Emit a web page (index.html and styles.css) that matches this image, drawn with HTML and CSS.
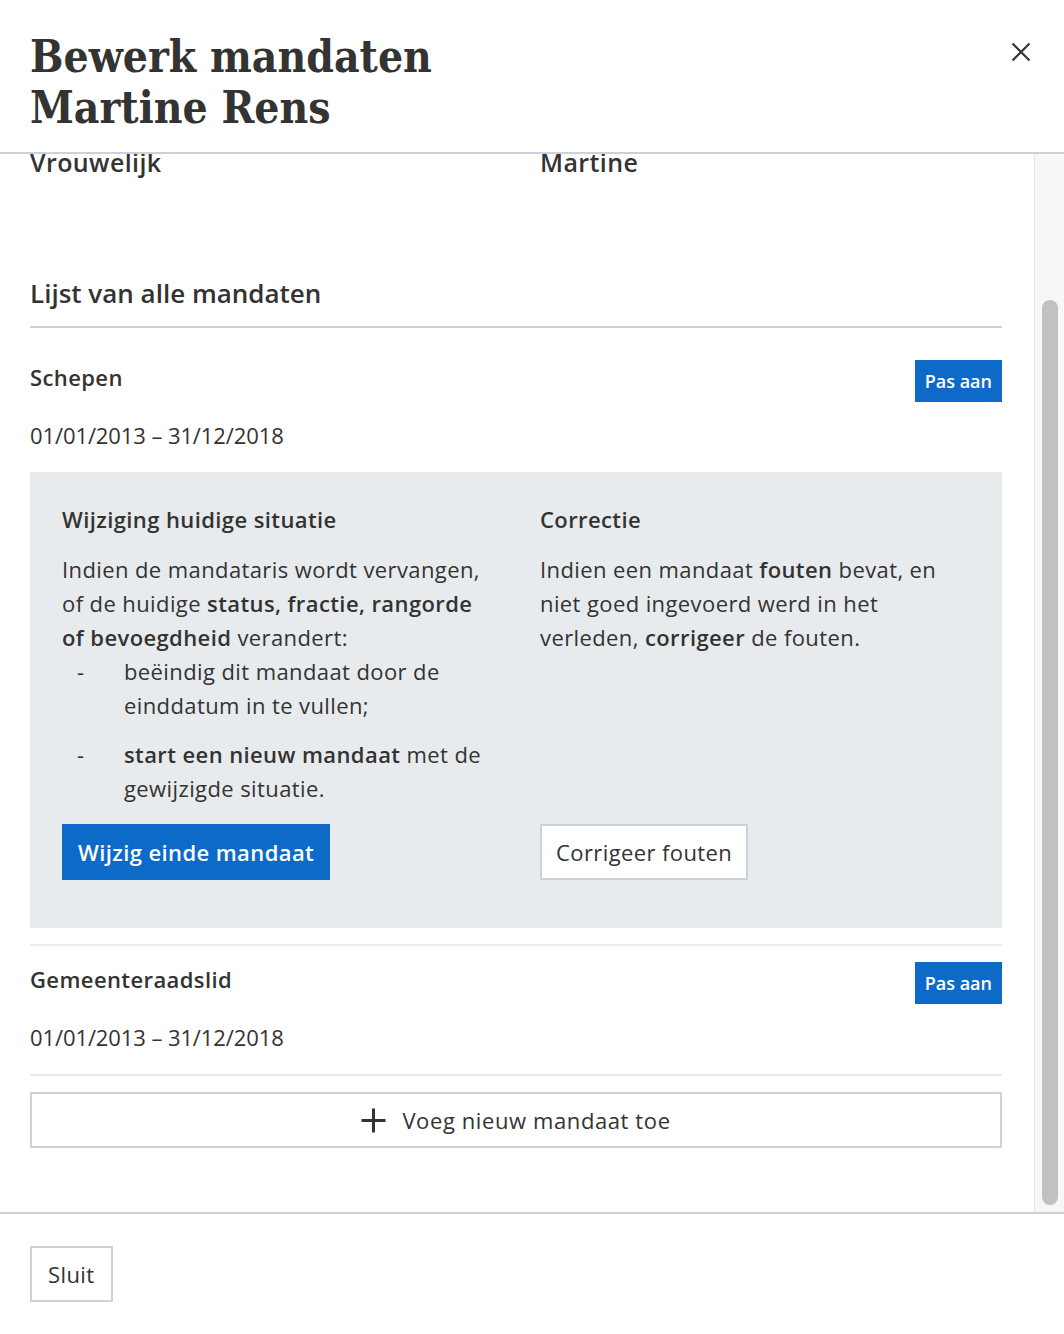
FILE: index.html
```html
<!DOCTYPE html>
<html lang="nl">
<head>
<meta charset="utf-8">
<title>Bewerk mandaten</title>
<link rel="stylesheet" href="styles.css">
</head>
<body>
<div class="modal">
  <header class="modal-header">
    <h1 class="modal-title">Bewerk mandaten<br>Martine Rens</h1>
    <button class="close-btn" type="button" aria-label="Sluit">
      <svg width="20" height="20" viewBox="0 0 20 20" aria-hidden="true"><path d="M1.5 1.5 L18.5 18.5 M18.5 1.5 L1.5 18.5" stroke="#333332" stroke-width="2.2" fill="none"/></svg>
    </button>
  </header>

  <div class="modal-body">
    <div class="scroll-view">
      <div class="body-inner">
        <dl class="person-grid">
          <div class="field"><dt>Familienaam</dt><dd>Rens</dd></div>
          <div class="field"><dt>Voornaam</dt><dd>Martine</dd></div>
          <div class="field"><dt>Geslacht</dt><dd>Vrouwelijk</dd></div>
          <div class="field"><dt>Roepnaam</dt><dd>Martine</dd></div>
        </dl>

        <h2 class="section-title">Lijst van alle mandaten</h2>

        <ul class="mandate-list">
          <li class="mandate">
            <div class="mandate-head">
              <h3 class="mandate-name">Schepen</h3>
              <button class="btn btn-primary btn-small" type="button">Pas aan</button>
            </div>
            <p class="mandate-period">01/01/2013 – 31/12/2018</p>
            <div class="info-box">
              <div class="info-col">
                <h4 class="info-title">Wijziging huidige situatie</h4>
                <p class="info-text">Indien de mandataris wordt vervangen, of de huidige <strong>status, fractie, rangorde of bevoegdheid</strong> verandert:</p>
                <ul class="dash-list">
                  <li><span>beëindig dit mandaat door de einddatum in te vullen;</span></li>
                  <li><span><strong>start een nieuw mandaat</strong> met de gewijzigde situatie.</span></li>
                </ul>
                <button class="btn btn-primary btn-large" type="button">Wijzig einde mandaat</button>
              </div>
              <div class="info-col">
                <h4 class="info-title">Correctie</h4>
                <p class="info-text">Indien een mandaat <strong>fouten</strong> bevat, en niet goed ingevoerd werd in het verleden, <strong>corrigeer</strong> de fouten.</p>
                <button class="btn btn-secondary btn-large" type="button">Corrigeer fouten</button>
              </div>
            </div>
          </li>
          <li class="mandate">
            <div class="mandate-head">
              <h3 class="mandate-name">Gemeenteraadslid</h3>
              <button class="btn btn-primary btn-small" type="button">Pas aan</button>
            </div>
            <p class="mandate-period">01/01/2013 – 31/12/2018</p>
          </li>
        </ul>

        <button class="btn btn-secondary btn-block" type="button">
          <svg width="25" height="25" viewBox="0 0 25 25" aria-hidden="true"><path d="M12.5 0.5 V24.5 M0.5 12.5 H24.5" stroke="#333332" stroke-width="3" fill="none"/></svg>
          <span>Voeg nieuw mandaat toe</span>
        </button>
      </div>
    </div>
    <div class="scrollbar" aria-hidden="true">
      <div class="scrollbar-thumb"></div>
    </div>
  </div>

  <footer class="modal-footer">
    <button class="btn btn-secondary btn-large btn-close" type="button">Sluit</button>
  </footer>
</div>
</body>
</html>
```
FILE: styles.css
```css
* { box-sizing: border-box; }

html, body {
  margin: 0;
  padding: 0;
  height: 100%;
}

body {
  font-family: "Open Sans", "Noto Sans", sans-serif;
  letter-spacing: 0.4px;
  color: #333332;
  background: #fff;
}

.modal {
  height: 100vh;
  display: flex;
  flex-direction: column;
  background: #fff;
}

/* Header */
.modal-header {
  flex-shrink: 0;
  display: flex;
  justify-content: space-between;
  align-items: flex-start;
  padding: 31px 33px 19px 30px;
  border-bottom: 2px solid #cbd2da;
}

.modal-title {
  margin: 0;
  font-family: "DejaVu Serif Condensed", "DejaVu Serif", serif;
  font-stretch: condensed;
  font-weight: 700;
  font-size: 44px;
  line-height: 51px;
  letter-spacing: 0;
  color: #333332;
}

.close-btn {
  margin-top: 11px;
  padding: 0;
  border: 0;
  background: none;
  width: 20px;
  height: 20px;
  display: block;
  cursor: pointer;
}
.close-btn svg { display: block; }

/* Body with scroll view and scrollbar */
.modal-body {
  flex: 1;
  min-height: 0;
  display: flex;
}

.scroll-view {
  flex: 1;
  min-width: 0;
  overflow: hidden;
  display: flex;
  flex-direction: column-reverse;
}

.scrollbar {
  flex: 0 0 30px;
  background: #f7f7f7;
  border-left: 1px solid #e6e6e6;
  padding: 8px 6px 7px 7px;
  display: flex;
  flex-direction: column;
  justify-content: flex-end;
}

.scrollbar-thumb {
  height: 905px;
  border-radius: 8px;
  background: #c1c1c1;
}

.body-inner {
  flex-shrink: 0;
  padding: 40px 32px 64px 30px;
}

/* Person data */
.person-grid {
  margin: 0;
  display: grid;
  grid-template-columns: 1fr 1fr;
  column-gap: 48px;
  row-gap: 30px;
}
.field dt {
  font-size: 16px;
  line-height: 24px;
  color: #687483;
}
.field dd {
  margin: 0;
  font-size: 25px;
  line-height: 34px;
  font-weight: 600;
}

/* Section */
.section-title {
  margin: 97px 0 0;
  padding-bottom: 16px;
  border-bottom: 2px solid #cbd2da;
  font-size: 26px;
  line-height: 34px;
  font-weight: 600;
  letter-spacing: 0;
}

.mandate-list {
  list-style: none;
  margin: 16px 0 0;
  padding: 0;
}

.mandate {
  padding: 16px 0;
  border-bottom: 2px solid #e8ebee;
}

.mandate-head {
  display: flex;
  justify-content: space-between;
  align-items: flex-start;
}

.mandate-name {
  margin: 0;
  font-size: 22px;
  line-height: 34px;
  font-weight: 600;
}

.mandate-period {
  margin: 16px 0 4px;
  font-size: 22px;
  line-height: 34px;
  letter-spacing: -0.1px;
}

/* Info box */
.info-box {
  margin-top: 20px;
  background: #e8ebee;
  padding: 30px 32px 48px;
  display: grid;
  grid-template-columns: 1fr 1fr;
  column-gap: 48px;
}

.info-col {
  display: flex;
  flex-direction: column;
  align-items: flex-start;
}

.info-title {
  margin: 0 0 16px;
  font-size: 22px;
  line-height: 34px;
  font-weight: 600;
}

.info-text {
  margin: 0;
  font-size: 22px;
  line-height: 34px;
}

.info-text strong,
.dash-list strong {
  font-weight: 600;
}

.dash-list {
  list-style: none;
  margin: 0 0 19px;
  padding: 0;
  font-size: 22px;
  line-height: 34px;
}
.dash-list li {
  display: flex;
}
.dash-list li + li {
  margin-top: 15px;
}
.dash-list li::before {
  content: "-";
  flex: 0 0 47px;
  padding-left: 15px;
}

.info-col > .btn {
  margin-top: auto;
}

/* Buttons */
.btn {
  font-family: inherit;
  font-size: 22px;
  line-height: 24px;
  letter-spacing: 0.4px;
  display: inline-flex;
  align-items: center;
  justify-content: center;
  border: 2px solid #cbd2da;
  background: #fff;
  color: #333332;
  cursor: pointer;
  white-space: nowrap;
}

.btn-primary {
  background: #0e6ac8;
  border-color: #0e6ac8;
  color: #fff;
  font-weight: 600;
}

.btn-secondary {
  background: #fff;
  border-color: #cbd2da;
  color: #333332;
}

.btn-small {
  height: 42px;
  padding: 0 8px;
  font-size: 18px;
  letter-spacing: 0;
}

.btn-large {
  height: 56px;
  padding: 0 14px;
}

.btn-close {
  padding: 0 16px;
}

.btn-block {
  width: 100%;
  height: 56px;
  margin-top: 16px;
  gap: 16px;
  letter-spacing: 0.6px;
}
.btn-block svg { display: block; }

/* Footer */
.modal-footer {
  flex-shrink: 0;
  border-top: 2px solid #cbd2da;
  padding: 32px 30px;
}
```
